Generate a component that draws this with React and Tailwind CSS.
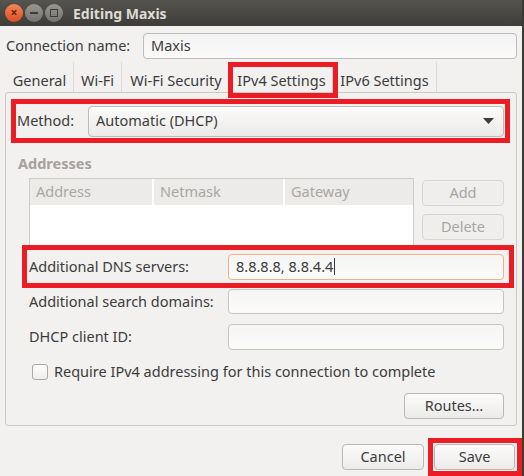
import React from "react";

const font = { fontFamily: '"Noto Sans", "Open Sans", sans-serif' };

const TitleButton = ({ kind }) => {
  if (kind === "close") {
    return (
      <div className="flex h-[18px] w-[18px] items-center justify-center rounded-full bg-gradient-to-b from-[#f5865a] to-[#dc4c1c] text-[12px] font-bold leading-none text-[#5e2610]">
        ×
      </div>
    );
  }
  return (
    <div className="flex h-[18px] w-[18px] items-center justify-center rounded-full bg-gradient-to-b from-[#98978f] to-[#74736e]">
      {kind === "min" ? (
        <div className="h-[2px] w-[8px] bg-[#3d3c38]" />
      ) : (
        <div className="h-[8px] w-[8px] border-[1.5px] border-[#3d3c38]" />
      )}
    </div>
  );
};

const Input = ({ value, focus, className = "" }) => (
  <div
    className={`flex items-center rounded-[4px] border bg-gradient-to-b from-[#f5f5f4] to-[#fbfbfb] px-[7px] ${
      focus ? "border-[#f2b089]" : "border-[#c6c5c2]"
    } ${className}`}
  >
    {value && <span className="text-[#3c3c3c]">{value}</span>}
    {focus && <span className="ml-[1px] h-[17px] w-[1px] bg-[#3c3c3c]" />}
  </div>
);

const Button = ({ children, disabled, className = "" }) => (
  <div
    className={`flex items-center justify-center rounded-[4px] border ${
      disabled
        ? "border-[#d6d5d2] bg-[#efeeed] text-[#a7a6a3]"
        : "border-[#b9b8b5] bg-gradient-to-b from-[#fbfbfb] to-[#ecebe9] text-[#3c3c3c]"
    } ${className}`}
  >
    {children}
  </div>
);

const tabs = [
  { label: "General", w: "w-[68px]", sep: true },
  { label: "Wi-Fi", w: "w-[48px]", sep: true },
  { label: "Wi-Fi Security", w: "w-[108px]" },
  { label: "IPv4 Settings", w: "w-[103px]" },
  { label: "IPv6 Settings", w: "w-[104px]", sep: true },
];

export default function App() {
  return (
    <div
      className="relative h-[476px] w-[524px] overflow-hidden border-r-2 border-[#3b3a36] bg-[#f2f1f0] text-[14.5px] text-[#3c3c3c]"
      style={font}
    >
      {/* title bar */}
      <div className="flex h-[26px] items-center bg-gradient-to-b from-[#55544f] to-[#3d3c38] pl-[5px]">
        <div className="flex gap-[2px]">
          <TitleButton kind="close" />
          <TitleButton kind="min" />
          <TitleButton kind="max" />
        </div>
        <span className="ml-[10px] text-[14px] font-bold text-[#dfdbd2]">Editing Maxis</span>
      </div>

      <div className="px-[5px]">
        {/* connection name */}
        <div className="mt-[7px] flex items-center">
          <span className="ml-[1px] w-[137px]">Connection name:</span>
          <Input value="Maxis" className="h-[26px] flex-1 !border-[#bdbcb9] !from-[#f3f3f3] !to-[#fafafa]" />
        </div>

        {/* tabs */}
        <div className="relative mt-[3px] flex h-[30px] pl-[1px]">
          {tabs.map((t, i) => (
            <div
              key={t.label}
              className={`flex h-full items-center justify-center pt-[7px] ${t.w} ${
                t.sep ? "border-r border-[#dcdbd8]" : ""
              } ${i === 3 ? "rounded-t-[3px] border border-b-0 border-[#cfcecb]" : ""}`}
            >
              {t.label}
            </div>
          ))}
          <div className="absolute left-[223px] top-0 z-20 h-[36px] w-[110px] border-[5px] border-[#ec1c24]" />
        </div>

        {/* notebook panel */}
        <div className="h-[334px] rounded-[3px] border border-[#cbcac7] pt-[6px]">
          <div className="ml-[5px] flex h-[44px] w-[499px] items-center border-[5px] border-[#ec1c24] pl-[1px] pr-[1px]">
            <span className="w-[71px]">Method:</span>
            <div className="flex h-[31px] flex-1 items-center justify-between rounded-[4px] border border-[#bcbbb8] bg-gradient-to-b from-[#fbfbfb] to-[#ebeae8] pl-[7px] pr-[9px]">
              <span>Automatic (DHCP)</span>
              <svg width="11" height="6" viewBox="0 0 11 6">
                <path d="M0 0 L11 0 L5.5 6 Z" fill="#3c3c3c" />
              </svg>
            </div>
          </div>

          <div className="ml-[12px] mt-[10px] h-[20px] font-bold leading-[20px] text-[#a6a29b]">Addresses</div>

          <div className="mt-[5px] flex">
            <div className="ml-[23px] h-[72px] w-[385px] border border-[#cdccc9] bg-white">
              <div className="flex h-[26px] bg-[#ecebea] text-[#aaa7a2]">
                <div className="flex w-[124px] items-center border-r-2 border-white pl-[6px]">Address</div>
                <div className="flex w-[131px] items-center border-r-2 border-white pl-[6px]">Netmask</div>
                <div className="flex flex-1 items-center pl-[6px]">Gateway</div>
              </div>
            </div>
            <div className="ml-[8px] flex flex-col gap-[8px] pt-[2px]">
              <Button disabled className="h-[26px] w-[82px]">Add</Button>
              <Button disabled className="h-[26px] w-[82px]">Delete</Button>
            </div>
          </div>

          {/* dns */}
          <div className="relative z-10 -mt-[5px] ml-[16px] flex h-[43px] w-[492px] items-center border-[5px] border-[#ec1c24] bg-[#f2f1f0] pl-[2px] pr-[5px]">
            <span className="w-[199px]">Additional DNS servers:</span>
            <Input value="8.8.8.8, 8.8.4.4" focus className="h-[26px] flex-1" />
          </div>

          <div className="ml-[23px] mt-[1px] flex w-[475px] items-center">
            <span className="w-[199px]">Additional search domains:</span>
            <Input className="h-[25px] flex-1" />
          </div>
          <div className="ml-[23px] mt-[10px] flex w-[475px] items-center">
            <span className="w-[199px]">DHCP client ID:</span>
            <Input className="h-[26px] flex-1" />
          </div>

          <div className="ml-[26px] mt-[11px] flex items-center">
            <div className="h-[16px] w-[16px] rounded-[3px] border border-[#a9a8a5] bg-gradient-to-b from-[#fdfdfd] to-[#eeedec]" />
            <span className="ml-[6px]">Require IPv4 addressing for this connection to complete</span>
          </div>

          <div className="mt-[10px] flex justify-end pr-[12px]">
            <Button className="h-[26px] w-[100px]">Routes…</Button>
          </div>
        </div>
      </div>

      {/* footer */}
      <div className="mt-[12px] flex items-start justify-end">
        <Button className="mt-[6px] h-[26px] w-[82px]">Cancel</Button>
        <div className="ml-[4px] h-[38px] w-[94px] border-[5px] border-[#ec1c24] pl-[1px] pt-[1px]">
          <Button className="h-[26px] w-[81px]">Save</Button>
        </div>
      </div>
    </div>
  );
}
